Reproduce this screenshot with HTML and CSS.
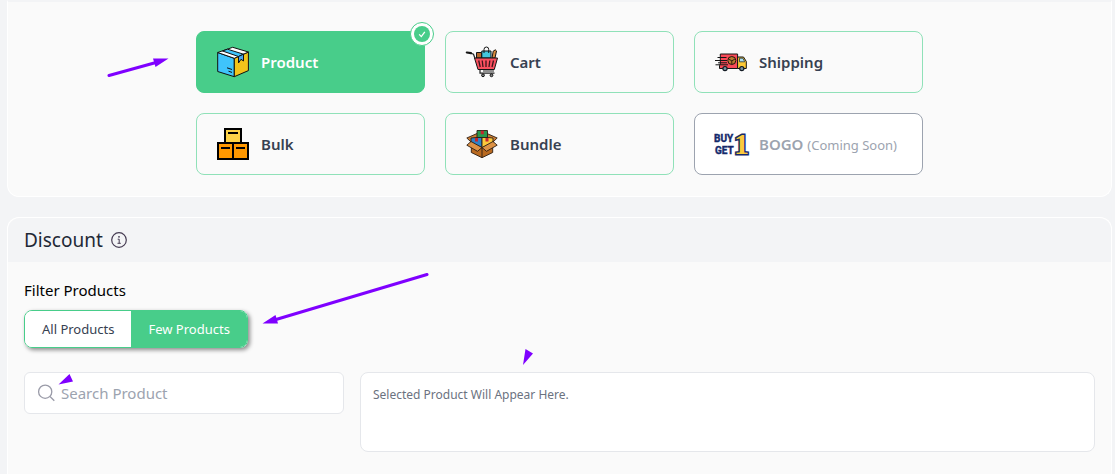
FILE: index.html
```html
<!DOCTYPE html>
<html lang="en">
  <head>
    <meta charset="UTF-8" />
    <meta name="viewport" content="width=device-width, initial-scale=1.0" />
    <title>Discount</title>
    <link rel="stylesheet" href="styles.css">
  </head>
  <body>
    <section class="panel types-panel">
      <div class="types">
        <button type="button" class="type active">
          <svg class="type-icon" viewBox="0 0 32 32" aria-hidden="true">
            <g stroke="#111" stroke-width="1" stroke-linejoin="round">
              <path d="M.7 6.5 17.3 12.3V30.7L.7 25.5Z" fill="#3fc4fb" />
              <path d="M17.3 12.3 31.4 6V24.6L17.3 30.7Z" fill="#f2c31b" />
              <path d="M.7 6.5 15.7 1.3 31.4 6 17.3 12.3Z" fill="#fff" />
              <path d="M5.5 5 21.5 10.5 26.5 8.2 10.5 3.2Z" fill="#3fc4fb" />
              <path d="M21.5 10.5 26.5 8.2V15L24 13.3 21.5 17Z" fill="#4aa5ee" />
            </g>
            <path d="M10 21.8 15 23.5M11.5 25.2 15 26.4" stroke="#111" fill="none" />
          </svg>
          <span>Product</span>
          <svg class="check" viewBox="0 0 24 24" aria-hidden="true">
            <circle cx="12" cy="12" r="11.5" fill="#fff" stroke="#48cd8a" />
            <circle cx="12" cy="12" r="8" fill="#48cd8a" />
            <path d="M9.2 12.4 11.3 14.6 14.8 9.8" fill="none" stroke="#fff" stroke-width="1.3" />
          </svg>
        </button>
        <button type="button" class="type">
          <svg class="type-icon" viewBox="0 0 32 32" aria-hidden="true">
            <g stroke="#151515" stroke-width="1" stroke-linejoin="round">
              <path d="M10.5 12V6.5H15.5V12Z" fill="#b5692d" />
              <path d="M26 12 27.2 5.2Q29.8 2.6 30.5 5L29 12Z" fill="#d98b3c" />
              <path d="M15.8 12V5H25V12Z" fill="#44c7dc" />
              <path d="M18 7V3.5Q18 1 20.4 1T22.7 3.5V7" fill="none" />
              <path d="M8.5 12H31.5L28.3 23.5H12Z" fill="#f9505f" />
            </g>
            <path d="M12.7 14.5 14.2 21M16.2 14.5 17 21M20 14.5V21M23.8 14.5 23 21M27.5 14.5 26 21" stroke="#3b151a" stroke-width="1.3" />
            <path d="M5 7.2 7.5 8.2 9 12.5M14 24V27.2H28.5M17 25H28" fill="none" stroke="#222" stroke-width="1.2" />
            <path d="M.8 6.5 5 7.2" stroke="#151515" stroke-width="2.2" stroke-linecap="round" />
            <circle cx="17" cy="29.3" r="1.4" fill="#888" stroke="#111" />
            <circle cx="25.5" cy="29.3" r="1.4" fill="#888" stroke="#111" />
          </svg>
          <span>Cart</span>
        </button>
        <button type="button" class="type">
          <svg class="type-icon" viewBox="0 0 32 32" aria-hidden="true">
            <path d="M5.3 8H22.6V22.5H4.5V19.5L5.3 18Z" fill="#f94a58" stroke="#151515" />
            <path d="M22.6 11H28.5L31.3 15.5V22.5H22.6Z" fill="#fcc935" stroke="#151515" />
            <path d="M24.5 12.2H27.8L29.8 15.8H24.5Z" fill="#a9dff3" stroke="#24353f" stroke-width=".8" />
            <circle cx="16.8" cy="14.5" r="4" fill="#bd7b31" stroke="#22150c" />
            <path d="M13.8 13.2 16.8 14.8 19.8 13.2M16.8 14.8V18" fill="none" stroke="#22150c" stroke-width=".9" />
            <path d="M2.5 11.5H11.5M0 14.5H12M3 16.8H12M.5 18.8H13" stroke="#151515" stroke-width="1" />
            <circle cx="10" cy="22.6" r="2.1" fill="#7993a1" stroke="#111922" stroke-width="1.2" />
            <circle cx="26.8" cy="22.6" r="2.1" fill="#7993a1" stroke="#111922" stroke-width="1.2" />
          </svg>
          <span>Shipping</span>
        </button>
        <button type="button" class="type">
          <svg class="type-icon" viewBox="0 0 32 32" aria-hidden="true">
            <g stroke="#000" stroke-width="2">
              <path d="M8 1H24V15H8Z" fill="#fdd247" />
              <path d="M1 15H16V31H1Z" fill="#ff9800" />
              <path d="M16 15H31V31H16Z" fill="#ff9800" />
              <path d="M11 5H21M4 20H13M19 20H28" fill="none" />
            </g>
          </svg>
          <span>Bulk</span>
        </button>
        <button type="button" class="type">
          <svg class="type-icon" viewBox="0 0 32 32" aria-hidden="true">
            <g stroke="#2b1d14" stroke-width=".9" stroke-linejoin="round">
              <path d="M.8 10 11 5.500 15 9 5 14Z" fill="#cb7e35" />
              <path d="M31.2 10 21 5.500 17 9 27 14Z" fill="#cb7e35" />
              <path d="M5 10 16 9V20L5 15Z" fill="#2e82c9" />
              <path d="M16 9 27 10V15L16 20Z" fill="#fcc93c" />
              <path d="M11 2.500H21.500V9.500H11Z" fill="#28974c" />
              <path d="M5.3 15.5 16 20 26.7 15.5V24.5L16 29.7 5.3 24.5Z" fill="#b96a21" />
              <path d="M16 20V29.5" />
              <path d="M5 13.5 16 19.5 11.5 23.3.8 17.2Z" fill="#dc9145" />
              <path d="M27 13.5 16 19.5 20.5 23.3 31.2 17.2Z" fill="#dc9145" />
            </g>
            <path d="M14.8 2.8H17.8V6.3H14.8ZM9 10H12V13.5H9ZM19.5 10H22.5V13.5H19.5Z" fill="#c3252f" />
          </svg>
          <span>Bundle</span>
        </button>
        <button type="button" class="type" disabled>
          <svg class="type-icon" viewBox="0 0 32 32" aria-hidden="true">
            <text class="bogo-word" x="-1" y="14">BUY</text>
            <text class="bogo-word" x="0" y="26">GET</text>
            <text class="bogo-one" x="19" y="26">1</text>
          </svg>
          <span>BOGO <small>(Coming Soon)</small></span>
        </button>
      </div>
    </section>

    <section class="panel discount-panel">
      <header class="panel-header">
        <h2>Discount</h2>
        <svg class="info" viewBox="0 0 16 16" aria-hidden="true">
          <circle cx="8" cy="8" r="7.3" fill="none" stroke="#453b52" stroke-width="1.2" />
          <circle cx="8" cy="4.8" r=".9" fill="#453b52" />
          <path d="M6.7 7.2H8.2V11.2M6.5 11.3H9.8" fill="none" stroke="#453b52" />
        </svg>
      </header>
      <div class="panel-body">
        <h3>Filter Products</h3>
        <div class="switch">
          <button type="button">All Products</button>
          <button type="button" class="active">Few Products</button>
        </div>
        <div class="picker">
          <div class="search">
            <svg class="search-icon" viewBox="0 0 18 18" aria-hidden="true">
              <circle cx="8.2" cy="7.7" r="6.6" />
              <path d="M13 12.5 17.3 16.8" />
            </svg>
            <input type="text" placeholder="Search Product" aria-label="Search Product" />
          </div>
          <div class="selected">Selected Product Will Appear Here.</div>
        </div>
      </div>
    </section>

    <!-- Guide arrows drawn over the page -->
    <svg class="arrows" width="600" height="400" aria-hidden="true">
      <path d="M109 75.5 156 62.5M427 274.5 276 319.5" stroke="#7f00ff" stroke-width="3" stroke-linecap="round" />
      <path d="M168.5 58.5 153 58.5 155.5 67ZM262.5 323.5 275.5 315 278 323.5ZM523 365 525.5 349 533 353.5ZM58.5 384.5 69.5 374 73 381.5Z" fill="#7f00ff" />
    </svg>
  </body>
</html>
```
FILE: styles.css
```css
* {
  box-sizing: border-box;
}
body {
  margin: 0;
  padding: 0 3px 0 7px;
  min-height: 100vh;
  display: flex;
  flex-direction: column;
  gap: 20px;
  background-color: #f3f4f6;
  font-family: "Noto Sans", "Open Sans", sans-serif;
  color: #1f2937;
}
button,
input {
  font-family: inherit;
}
h2,
h3 {
  margin: 0;
  font-weight: 400;
}
/* Panels */
.panel {
  background-color: #fafafa;
  border: 1px solid #fff;
  border-radius: 12px;
}
.types-panel {
  border-top: 2px solid #f3f4f6;
  border-radius: 0 0 12px 12px;
  padding: 29px 16px 21px;
}
.discount-panel {
  flex: 1;
  border-bottom: 0;
  border-radius: 12px 12px 0 0;
}
.panel-header {
  display: flex;
  align-items: center;
  gap: 8px;
  height: 44px;
  padding: 0 16px;
  background-color: #f3f4f6;
  border-radius: 12px 12px 0 0;
}
.panel-header h2 {
  font-size: 19px;
  line-height: 28px;
}
.info {
  width: 16px;
  height: 16px;
}
.panel-body {
  padding: 16px;
}
/* Discount types */
.types {
  display: grid;
  grid-template-columns: repeat(3, 1fr);
  gap: 20px;
  max-width: 727px;
  margin: 0 auto;
}
.type {
  position: relative;
  display: flex;
  align-items: center;
  gap: 12px;
  padding: 14px 20px;
  border: 1px solid #8fe1b8;
  border-radius: 8px;
  background-color: #fafafa;
  color: #374151;
  font-size: 15px;
  font-weight: 600;
  text-align: left;
  cursor: pointer;
}
.type.active {
  background-color: #48cd8a;
  border-color: #48cd8a;
  color: #fff;
}
.type:disabled {
  background-color: #fff;
  border-color: #9ca3af;
  color: #9ca3af;
  cursor: default;
}
.type small {
  font-size: 13px;
  font-weight: 400;
}
.type-icon {
  flex: none;
  width: 32px;
  height: 32px;
  overflow: visible;
}
.check {
  position: absolute;
  top: -10px;
  right: -10px;
  width: 24px;
  height: 24px;
}
.bogo-word {
  font-family: Roboto, sans-serif;
  font-size: 10px;
  font-weight: 700;
  fill: #14296b;
  stroke: #14296b;
  stroke-width: 0.4px;
}
.bogo-one {
  font-family: "Liberation Serif", serif;
  font-size: 30px;
  font-weight: 700;
  fill: #fcc93c;
  stroke: #14296b;
  stroke-width: 3px;
  paint-order: stroke;
}
/* Product filter */
.panel-body h3 {
  color: #000;
  font-size: 15px;
  line-height: 24px;
}
.switch {
  display: inline-flex;
  margin: 8px 0 24px;
  border: 1px solid #48cd8a;
  border-radius: 8px;
  overflow: hidden;
  box-shadow: 2px 2px 4px rgba(0, 0, 0, 0.45);
  vertical-align: top;
}
.switch button {
  height: 36px;
  padding: 0 17px;
  border: 0;
  background-color: #fff;
  color: #374151;
  font-size: 13px;
  cursor: pointer;
}
.switch .active {
  background-color: #48cd8a;
  color: #fff;
}
.picker {
  display: grid;
  grid-template-columns: 320px 1fr;
  align-items: start;
  gap: 16px;
}
.search {
  display: flex;
  align-items: center;
  gap: 6px;
  height: 42px;
  padding: 0 12px;
  background-color: #fff;
  border: 1px solid #e5e7eb;
  border-radius: 6px;
}
.search-icon {
  flex: none;
  width: 18px;
  height: 18px;
  fill: none;
  stroke: #9a9ba8;
  stroke-width: 1.3px;
}
.search input {
  flex: 1;
  min-width: 0;
  padding: 0;
  border: 0;
  outline: 0;
  background: none;
  font-size: 15px;
}
.search input::placeholder {
  color: #9ca3af;
}
.selected {
  min-height: 80px;
  padding: 12px;
  background-color: #fff;
  border: 1px solid #e5e7eb;
  border-radius: 8px;
  color: #6b7280;
  font-size: 12px;
  line-height: 20px;
}
/* Arrows */
.arrows {
  position: absolute;
  top: 0;
  left: 0;
  pointer-events: none;
}
```
